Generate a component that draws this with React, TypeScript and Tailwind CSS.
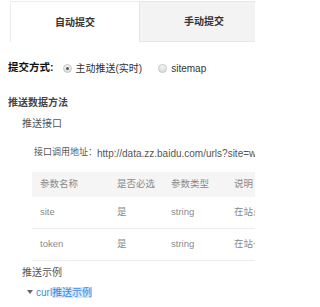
import React from "react";

const font = { fontFamily: '"Liberation Sans", "Noto Sans CJK SC", sans-serif' };

function Radio({ checked }: { checked?: boolean }) {
  return (
    <span className="inline-flex h-[9px] w-[9px] items-center justify-center rounded-full border border-[#c4c4c4] bg-gradient-to-b from-[#f4f4f4] to-[#dedede]">
      {checked && <span className="h-[3px] w-[3px] rounded-full bg-[#555]" />}
    </span>
  );
}

export default function App() {
  const rows = [
    ["site", "是", "string", "在站点管理中添加的网站域名"],
    ["token", "是", "string", "在站长平台申请的推送用的准入密钥"],
  ];
  return (
    <div
      className="w-[255px] h-[307px] overflow-hidden bg-white text-[10px] text-[#555]"
      style={font}
    >
      {/* tabs */}
      <div className="flex h-[42px] pt-[1px] pl-[10px]">
        <div className="flex w-[129px] shrink-0 items-center justify-center border-l border-t border-[#ececec] bg-white text-[10px] font-bold text-[#333]">
          自动提交
        </div>
        <div className="flex w-[129px] shrink-0 items-center justify-center border-l border-t border-b border-[#e6e6e6] bg-[#f3f3f3] text-[10px] font-bold text-[#333]">
          手动提交
        </div>
      </div>

      {/* submit method */}
      <div className="mt-[16px] flex h-[20px] items-center pl-[8px]">
        <span className="text-[10.5px] font-bold text-[#111]">提交方式:</span>
        <span className="ml-[9px] flex items-center">
          <Radio checked />
          <span className="ml-[4px] text-[#333]">主动推送(实时)</span>
        </span>
        <span className="ml-[16px] flex items-center">
          <Radio />
          <span className="ml-[4px] text-[#333]">sitemap</span>
        </span>
      </div>

      <div className="mt-[14px] flex h-[20px] items-center pl-[8px] font-bold text-[#444]">
        推送数据方法
      </div>
      <div className="mt-[1px] flex h-[20px] items-center pl-[22px] text-[#555]">推送接口</div>

      <div className="mt-[10px] flex h-[20px] items-center whitespace-nowrap pl-[34px] text-[#555]">
        <span className="text-[9px]">接口调用地址：</span>
        <span>http://data.zz.baidu.com/urls?site=www.example.com&amp;token=edk7yc4rEZP9pDQD</span>
      </div>

      {/* table */}
      <div className="mt-[9px] ml-[32px] w-[320px] text-[9.5px] text-[#8a8a8a]">
        <div className="grid h-[25px] grid-cols-[77px_54px_63px_1fr] items-center bg-[#f5f5f5] pl-[8px]">
          <span>参数名称</span>
          <span>是否必选</span>
          <span>参数类型</span>
          <span className="whitespace-nowrap">说明</span>
        </div>
        {rows.map((r) => (
          <div
            key={r[0]}
            className="grid h-[32px] grid-cols-[77px_54px_63px_1fr] items-center border-b border-[#ececec] pl-[8px]"
          >
            <span>{r[0]}</span>
            <span>{r[1]}</span>
            <span>{r[2]}</span>
            <span className="whitespace-nowrap">{r[3]}</span>
          </div>
        ))}
      </div>

      <div className="mt-[1px] flex h-[20px] items-center pl-[22px] text-[#555]">推送示例</div>
      <div className="flex h-[20px] items-center pl-[27px]">
        <svg width="6" height="4" viewBox="0 0 6 4" className="mr-[3px]">
          <path d="M0 0 L6 0 L3 4 Z" fill="#666" />
        </svg>
        <span className="text-[#3b8ee0]">
          curl<span className="bg-[#d4e6f9]">推送示例</span>
        </span>
      </div>
    </div>
  );
}
